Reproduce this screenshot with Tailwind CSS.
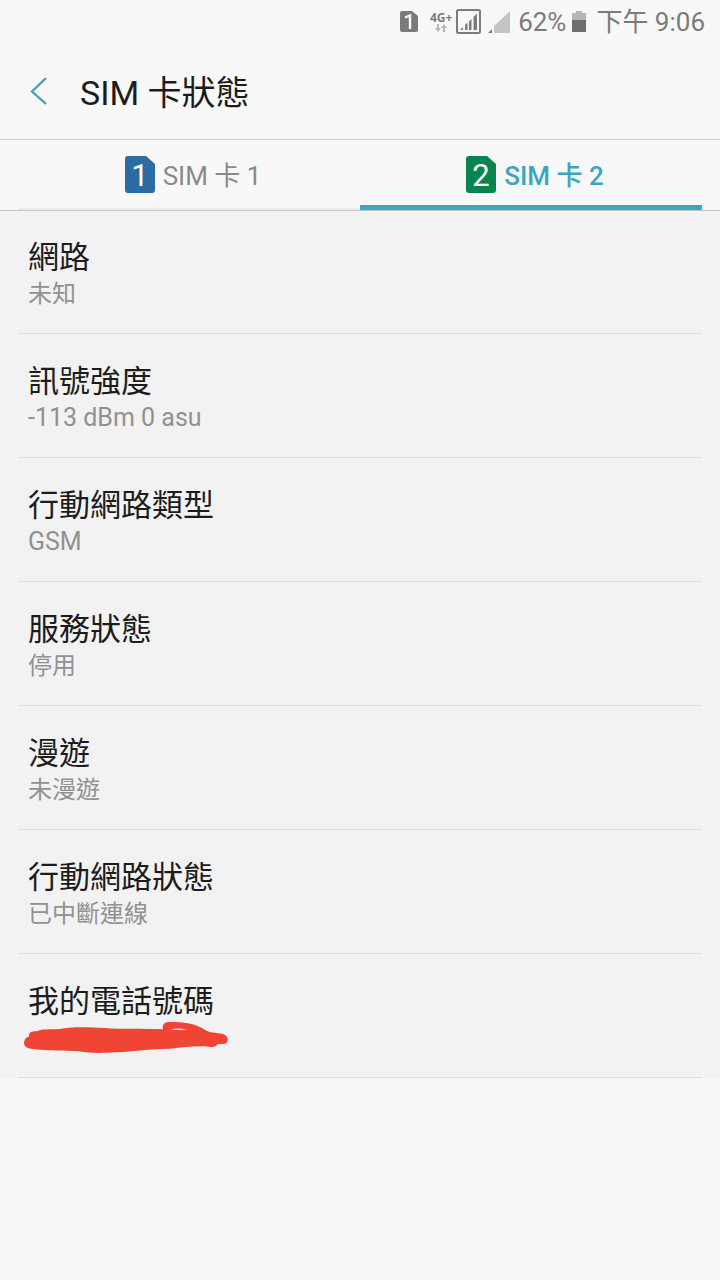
<!DOCTYPE html>
<html lang="zh-Hant">
<head>
  <meta charset="UTF-8">
  <meta name="viewport" content="width=device-width, initial-scale=1.0">
  <title>SIM 卡狀態</title>
  <script src="https://cdn.jsdelivr.net/npm/@tailwindcss/browser@4"></script>
</head>
<body class="min-h-screen bg-[#f8f8f8] font-[Roboto,'Noto_Sans_CJK_TC',sans-serif] text-[#1c1c1c]">

  <!-- Status bar -->
  <div class="flex h-11 items-center justify-end pr-[15px] text-[26px] leading-8 text-[#7b7b7b]">
    <svg class="h-6 w-5" viewBox="0 0 20 24">
      <path d="M3 1h9l6 5v14a2 2 0 0 1-2 2H2a2 2 0 0 1-2-2V3a2 2 0 0 1 2-2z" fill="#7b7b7b"/>
      <path d="M5 7.500l5-2V19" fill="none" stroke="#fff" stroke-width="2.4"/>
    </svg>
    <div class="ml-2.5 flex w-[22px] flex-col items-center">
      <span class="font-['Open_Sans'] text-[12px] leading-3 font-bold">4G+</span>
      <svg class="h-2 w-3" viewBox="0 0 12 8" fill="#b5b5b5">
        <path d="M2 0h2v4h2L3 8 0 4h2zM8 8h2V4h2L9 0 6 4h2z"/>
      </svg>
    </div>
    <svg class="ml-1 h-[26px] w-[26px]" viewBox="0 0 26 26">
      <rect x="1" y="1" width="23" height="23" rx="1.500" fill="none" stroke="#7b7b7b" stroke-width="2"/>
      <path d="M4 21l3-3v3zM9 21v-5l2.500-2.500V21zM13 21v-8.500l2.500-2.500v11zM17.500 21V8L21 4.500V21z" fill="#7b7b7b"/>
    </svg>
    <svg class="ml-1.5 h-[22px] w-[22px]" viewBox="0 0 22 22">
      <path d="M22 0v22H6V15z" fill="#c4c4c4"/>
      <path d="M4 18v4H0z" fill="#7b7b7b"/>
    </svg>
    <span class="ml-2">62%</span>
    <svg class="ml-1.5 h-[22px] w-3.5" viewBox="0 0 14 22">
      <path d="M4 0h6v2h4v7H0V2h4z" fill="#b5b5b5"/>
      <path d="M0 9h14v12H0z" fill="#6f6f6f"/>
    </svg>
    <span class="ml-2.5">下午 9:06</span>
  </div>

  <!-- Header -->
  <header class="flex h-24 items-center border-b border-[#cccccc] pl-7">
    <button type="button" aria-label="返回" class="flex w-[52px] items-center">
      <svg class="h-7 w-5" viewBox="0 0 20 28" fill="none" stroke="#3d9fb5" stroke-width="2.200">
        <path d="M18 0L4 13.500 18 26"/>
      </svg>
    </button>
    <h1 class="pt-0.5 text-[34px] leading-10">SIM 卡狀態</h1>
  </header>

  <!-- Tabs -->
  <nav class="flex h-[70px] px-[18px]" role="tablist">
    <button type="button" role="tab" aria-selected="false" class="flex w-1/2 items-center justify-center gap-2 border-b-2 border-[#ececec] pt-0.5 pl-2 text-[26px] leading-8 text-[#8a8a8a]">
      <svg class="h-[38px] w-[30px]" viewBox="0 0 30 38">
        <path d="M3 0h18l9 8v26a3 3 0 0 1-3 3H3a3 3 0 0 1-3-3V3a3 3 0 0 1 3-3z" fill="#2a6ca3"/>
        <text x="15" y="30" text-anchor="middle" font-size="31" fill="#fff">1</text>
      </svg>
      <span class="pt-0.5">SIM 卡 1</span>
    </button>
    <button type="button" role="tab" aria-selected="true" class="flex w-1/2 items-center justify-center gap-2 border-b-[5px] border-[#38a6c4] pt-1 pl-2 text-[26px] leading-8 font-medium text-[#38a6c4]">
      <svg class="h-[38px] w-[30px]" viewBox="0 0 30 38">
        <path d="M3 0h18l9 8v26a3 3 0 0 1-3 3H3a3 3 0 0 1-3-3V3a3 3 0 0 1 3-3z" fill="#078450"/>
        <text x="15" y="30" text-anchor="middle" font-size="31" font-weight="400" fill="#fff">2</text>
      </svg>
      <span class="pt-0.5">SIM 卡 2</span>
    </button>
  </nav>

  <!-- Details -->
  <main class="bg-[#f2f2f2] shadow-[inset_0_1px_0_#c4c4c4]">
    <dl class="text-2xl leading-8 text-[#919191]">
      <div class="mx-[18px] h-[124px] border-b border-[#dedede] px-2.5 pt-7">
        <dt class="text-[31px] leading-10 text-[#1c1c1c]">網路</dt>
        <dd>未知</dd>
      </div>
      <div class="mx-[18px] h-[124px] border-b border-[#dedede] px-2.5 pt-7">
        <dt class="text-[31px] leading-10 text-[#1c1c1c]">訊號強度</dt>
        <dd class="text-[25px]">-113 dBm 0 asu</dd>
      </div>
      <div class="mx-[18px] h-[124px] border-b border-[#dedede] px-2.5 pt-7">
        <dt class="text-[31px] leading-10 text-[#1c1c1c]">行動網路類型</dt>
        <dd class="text-[25px]">GSM</dd>
      </div>
      <div class="mx-[18px] h-[124px] border-b border-[#dedede] px-2.5 pt-7">
        <dt class="text-[31px] leading-10 text-[#1c1c1c]">服務狀態</dt>
        <dd>停用</dd>
      </div>
      <div class="mx-[18px] h-[124px] border-b border-[#dedede] px-2.5 pt-7">
        <dt class="text-[31px] leading-10 text-[#1c1c1c]">漫遊</dt>
        <dd>未漫遊</dd>
      </div>
      <div class="mx-[18px] h-[124px] border-b border-[#dedede] px-2.5 pt-7">
        <dt class="text-[31px] leading-10 text-[#1c1c1c]">行動網路狀態</dt>
        <dd>已中斷連線</dd>
      </div>
      <div class="mx-[18px] h-[124px] border-b border-[#dedede] px-2.5 pt-7">
        <dt class="text-[31px] leading-10 text-[#1c1c1c]">我的電話號碼</dt>
        <dd class="-ml-1">
          <!-- number is crossed out by hand -->
          <svg class="h-8 w-[204px]" viewBox="42 156 612 96" fill="#f04434">
            <path d="M57 195C58 184 70 184 82 184C90 176 120 179 150 177C180 170 230 171 285 174C330 178 400 175 459 178C456 163 463 156 480 156C515 156 545 160 562 168C577 173 590 184 602 187C625 190 642 191 646 196C656 203 655 218 646 221L622 223C618 232 607 232 596 230C560 227 520 232 480 236C420 237 370 244 320 247C270 250 240 250 207 244C160 240 120 244 62 236C46 234 42 226 42 217C44 206 49 201 57 200z"/>
            <path d="M482 179C500 173 520 176 530 180L510 180z" fill="#f2f2f2"/>
          </svg>
        </dd>
      </div>
    </dl>
  </main>

</body>
</html>
